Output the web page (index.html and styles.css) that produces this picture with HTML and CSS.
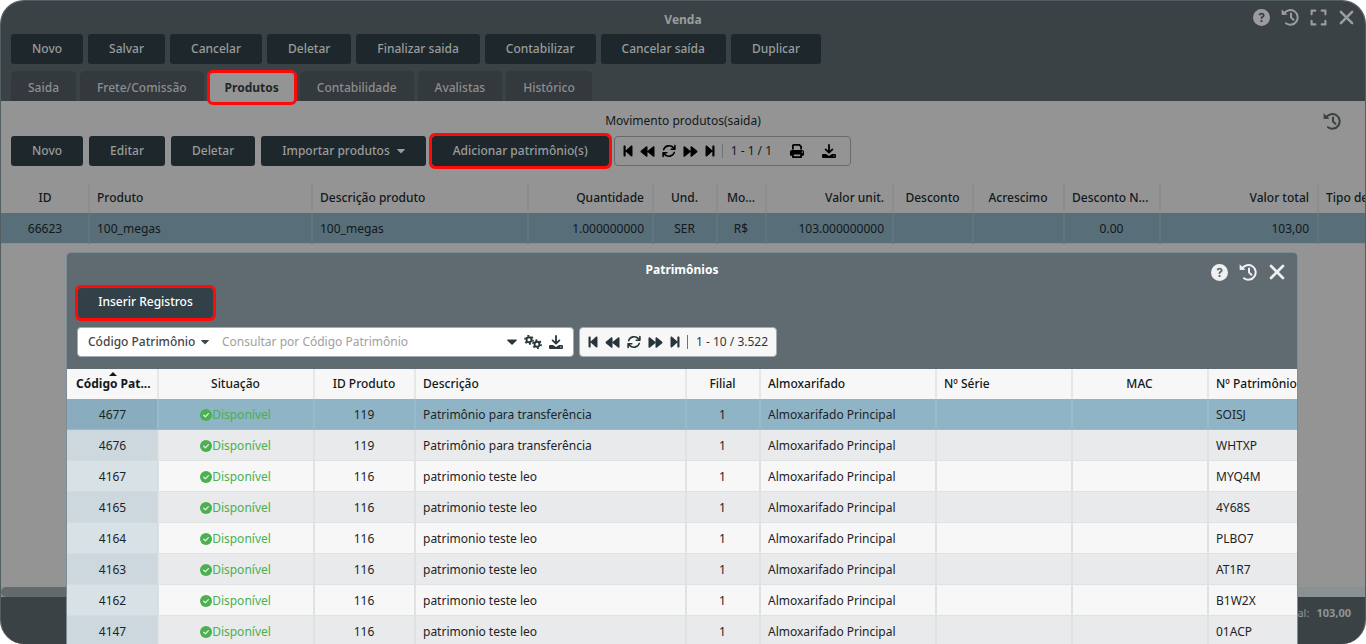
FILE: index.html
```html
<!DOCTYPE html>
<html lang="pt-BR">
<head>
<meta charset="utf-8">
<title>Venda</title>
<link rel="stylesheet" href="styles.css">
</head>
<body>
<svg class="sprite" aria-hidden="true">
  <symbol id="help" viewBox="0 0 16 16"><path fill="currentColor" fill-rule="evenodd" d="M8 0a8 8 0 1 0 0 16A8 8 0 0 0 8 0zM5.3 5.7C5.6 4.2 6.700 3.500 8.100 3.500c1.600 0 2.800 1 2.800 2.400 0 1.100-.6 1.700-1.500 2.200-.5.300-.6.500-.6.900v.3H7.200v-.5c0-1 .5-1.500 1.200-1.900.6-.4.800-.6.800-1 0-.5-.4-.8-1.100-.8-.6 0-1 .3-1.200.9zM7.100 10.300h1.800v1.900H7.100z"/></symbol>
  <symbol id="history" viewBox="0 0 18 18"><path fill="none" stroke="currentColor" stroke-width="2" stroke-linecap="round" stroke-linejoin="round" d="M3.200 5.400A7.300 7.300 0 1 1 5 15.200M10 5.500V9.400l2.400 2.300"/><path fill="currentColor" d="M.6 1.200l.1 5.700 5.800-.1z"/></symbol>
  <symbol id="expand" viewBox="0 0 16 16"><path fill="none" stroke="currentColor" stroke-width="2" stroke-linecap="round" stroke-linejoin="round" d="M1.500 5V1.500H5M11 1.500h3.500V5M14.500 11v3.500H11M5 14.500H1.500V11"/></symbol>
  <symbol id="close" viewBox="0 0 16 16"><path fill="none" stroke="currentColor" stroke-width="2.400" stroke-linecap="round" d="M2.700 2.700l10.600 10.600M13.300 2.700L2.700 13.300"/></symbol>
  <symbol id="step" viewBox="-.5 -.8 11 15.600"><path fill="currentColor" d="M0 1.700C0 1.300.3 1 .7 1h1c.4 0 .7.300.7.700v4.700L8.300 1.200C9 .7 10 1.100 10 2v10c0 .9-1 1.300-1.700.8L2.400 7.600v4.700c0 .4-.3.700-.7.700h-1c-.4 0-.7-.3-.7-.7z"/></symbol>
  <symbol id="rewind" viewBox="-18 -18 548 548"><path fill="currentColor" d="M11.500 280.600l192 160c20.600 17.200 52.500 2.800 52.500-24.600V96c0-27.400-31.900-41.800-52.500-24.600l-192 160c-15.300 12.800-15.300 36.400 0 49.200zm256 0l192 160c20.600 17.200 52.500 2.800 52.500-24.600V96c0-27.400-31.900-41.800-52.500-24.600l-192 160c-15.300 12.800-15.300 36.400 0 49.200z"/></symbol>
  <symbol id="refresh" viewBox="0 0 14 14"><path fill="none" stroke="currentColor" stroke-width="1.600" stroke-linecap="round" stroke-linejoin="round" d="M1.700 5.600C2.900 1.500 8.500.4 11.400 3.600l1.300 1.300M12.900 1.500V5.200H9.200M12.300 8.400c-1.200 4.100-6.800 5.200-9.700 2L1.300 9.100M1.100 12.500V8.800h3.700"/></symbol>
  <symbol id="print" viewBox="0 0 14 14"><path fill="currentColor" d="M2 5.500V1.700C2 .8 2.800 0 3.700 0h6l2.300 2.200v3.300h-1.800V2.900L9.100 1.800H3.800v3.700z"/><path fill="currentColor" fill-rule="evenodd" d="M1.800 6h10.400C13.200 6 14 6.800 14 7.800V11c0 .5-.3.800-.8.800H12v1.400c0 .5-.4.800-.9.800H2.900c-.5 0-.9-.3-.9-.8v-1.400H.8c-.5 0-.8-.3-.8-.8V7.800C0 6.800.8 6 1.800 6zm2 4.400v1.800h6.400v-1.800zM11.700 7.400v1.300H13V7.400z"/></symbol>
  <symbol id="download" viewBox="0 0 14 14"><path fill="none" stroke="currentColor" stroke-width="1.800" stroke-linecap="round" stroke-linejoin="round" d="M7 1v7.200M3.600 5.400L7 8.600l3.400-3.200"/><path fill="currentColor" fill-rule="evenodd" d="M1.400 9.900h2.600L7 12l3-2.100h2.600c.8 0 1.400.5 1.400 1.200v1.600c0 .7-.6 1.300-1.400 1.300H1.400C.6 14 0 13.400 0 12.700v-1.600c0-.7.600-1.200 1.400-1.200zm9.900 1.500v1.100h1.200v-1.100z"/></symbol>
  <symbol id="gears" viewBox="0 0 18 14"><g fill="none" stroke="currentColor"><circle cx="5" cy="4.800" r="2.500" stroke-width="1.900"/><circle cx="5" cy="4.800" r="4.100" stroke-width="1.600" stroke-dasharray="2 2.290"/><circle cx="13" cy="9.200" r="2.500" stroke-width="1.900"/><circle cx="13" cy="9.200" r="4.100" stroke-width="1.600" stroke-dasharray="2 2.290"/></g></symbol>
  <symbol id="caret" viewBox="0 0 10 6"><path fill="currentColor" d="M.7.500h8.600c.5 0 .8.600.4 1L5.600 5.600c-.3.300-.8.300-1.100 0L.3 1.500C-.1 1.100.2.500.7.500z"/></symbol>
  <symbol id="check" viewBox="0 0 12 12"><circle cx="6" cy="6" r="6" fill="currentColor"/><path fill="none" stroke="#ffffff" stroke-width="1.300" stroke-linecap="round" stroke-linejoin="round" stroke-opacity=".8" d="M3.700 6.200l1.700 1.600 3-3.200"/></symbol>
</svg>

<main class="window">
  <header class="window-head">
    <div class="title-bar">
      <h1>Venda</h1>
      <div class="window-tools">
        <button type="button" class="icon-btn" aria-label="Ajuda"><svg class="i17"><use href="#help"/></svg></button>
        <button type="button" class="icon-btn" aria-label="Histórico"><svg class="i18"><use href="#history"/></svg></button>
        <button type="button" class="icon-btn" aria-label="Expandir"><svg class="i17"><use href="#expand"/></svg></button>
        <button type="button" class="icon-btn" aria-label="Fechar"><svg class="i17"><use href="#close"/></svg></button>
      </div>
    </div>
    <div class="actions">
      <button type="button" class="btn">Novo</button>
      <button type="button" class="btn">Salvar</button>
      <button type="button" class="btn">Cancelar</button>
      <button type="button" class="btn">Deletar</button>
      <button type="button" class="btn">Finalizar saida</button>
      <button type="button" class="btn">Contabilizar</button>
      <button type="button" class="btn">Cancelar saída</button>
      <button type="button" class="btn">Duplicar</button>
    </div>
    <nav class="tabs">
      <button type="button" class="tab">Saida</button>
      <button type="button" class="tab">Frete/Comissão</button>
      <button type="button" class="tab active marked">Produtos</button>
      <button type="button" class="tab">Contabilidade</button>
      <button type="button" class="tab">Avalistas</button>
      <button type="button" class="tab">Histórico</button>
    </nav>
  </header>

  <section class="products">
    <div class="section-bar">
      <h2>Movimento produtos(saida)</h2>
      <button type="button" class="icon-btn section-history" aria-label="Histórico"><svg class="i18"><use href="#history"/></svg></button>
    </div>
    <div class="actions product-actions">
      <button type="button" class="btn">Novo</button>
      <button type="button" class="btn">Editar</button>
      <button type="button" class="btn">Deletar</button>
      <button type="button" class="btn">Importar produtos <svg class="caret small"><use href="#caret"/></svg></button>
      <button type="button" class="btn marked">Adicionar patrimônio(s)</button>
      <div class="pager">
        <button type="button" class="icon-btn" aria-label="Primeiro"><svg class="i10"><use href="#step"/></svg></button>
        <button type="button" class="icon-btn" aria-label="Anterior"><svg class="i15"><use href="#rewind"/></svg></button>
        <button type="button" class="icon-btn" aria-label="Atualizar"><svg class="i14"><use href="#refresh"/></svg></button>
        <button type="button" class="icon-btn flip" aria-label="Próximo"><svg class="i15"><use href="#rewind"/></svg></button>
        <button type="button" class="icon-btn flip" aria-label="Último"><svg class="i10"><use href="#step"/></svg></button>
        <span class="count">1 - 1 / 1</span>
        <button type="button" class="icon-btn extra" aria-label="Imprimir"><svg class="i14"><use href="#print"/></svg></button>
        <button type="button" class="icon-btn extra" aria-label="Baixar"><svg class="i14"><use href="#download"/></svg></button>
      </div>
    </div>
    <div class="grid-wrap">
      <table class="grid product-grid">
        <colgroup><col class="w88"><col class="w223"><col class="w216"><col class="w125"><col class="w64"><col class="w49"><col class="w127"><col class="w80"><col class="w91"><col class="w96"><col class="w158"><col class="w120"></colgroup>
        <thead><tr><th class="c">ID</th><th>Produto</th><th>Descrição produto</th><th class="r">Quantidade</th><th class="c">Und.</th><th class="c">Mo...</th><th class="r">Valor unit.</th><th class="c">Desconto</th><th class="c">Acrescimo</th><th>Desconto N...</th><th class="r">Valor total</th><th>Tipo desconto</th></tr></thead>
        <tbody><tr><td class="c">66623</td><td>100_megas</td><td>100_megas</td><td class="r">1.000000000</td><td class="c">SER</td><td class="c">R$</td><td class="r">103.000000000</td><td></td><td></td><td class="c">0.00</td><td class="r">103,00</td><td></td></tr></tbody>
      </table>
    </div>
  </section>
  <div class="scroll-track"><div class="scroll-thumb"></div></div>
  <footer class="window-foot"><span>Total:</span><strong>103,00</strong></footer>

  <section class="modal" role="dialog" aria-labelledby="modal-title">
    <div class="modal-head">
      <div class="title-bar">
        <h2 id="modal-title">Patrimônios</h2>
        <div class="modal-tools">
          <button type="button" class="icon-btn" aria-label="Ajuda"><svg class="i17"><use href="#help"/></svg></button>
          <button type="button" class="icon-btn" aria-label="Histórico"><svg class="i18"><use href="#history"/></svg></button>
          <button type="button" class="icon-btn" aria-label="Fechar"><svg class="i18"><use href="#close"/></svg></button>
        </div>
      </div>
      <div class="actions"><button type="button" class="btn marked insert">Inserir Registros</button></div>
      <div class="search-row">
        <div class="search">
          <label class="field">
            <select aria-label="Campo de busca"><option>Código Patrimônio</option></select>
            <svg class="caret small"><use href="#caret"/></svg>
          </label>
          <input type="text" aria-label="Consultar" placeholder="Consultar por Código Patrimônio">
          <button type="button" class="icon-btn" aria-label="Opções"><svg class="caret"><use href="#caret"/></svg></button>
          <button type="button" class="icon-btn" aria-label="Configurar"><svg class="gears"><use href="#gears"/></svg></button>
          <button type="button" class="icon-btn" aria-label="Baixar"><svg class="i14"><use href="#download"/></svg></button>
        </div>
        <div class="pager">
          <button type="button" class="icon-btn" aria-label="Primeiro"><svg class="i10"><use href="#step"/></svg></button>
          <button type="button" class="icon-btn" aria-label="Anterior"><svg class="i15"><use href="#rewind"/></svg></button>
          <button type="button" class="icon-btn" aria-label="Atualizar"><svg class="i14"><use href="#refresh"/></svg></button>
          <button type="button" class="icon-btn flip" aria-label="Próximo"><svg class="i15"><use href="#rewind"/></svg></button>
          <button type="button" class="icon-btn flip" aria-label="Último"><svg class="i10"><use href="#step"/></svg></button>
          <span class="count">1 - 10 / 3.522</span>
        </div>
      </div>
    </div>
    <table class="grid asset-grid">
      <colgroup><col class="w91"><col class="w156"><col class="w101"><col class="w271"><col class="w74"><col class="w176"><col class="w136"><col class="w136"><col class="w120"></colgroup>
      <thead><tr><th class="c sorted">Código Pat...</th><th class="c">Situação</th><th class="c">ID Produto</th><th>Descrição</th><th class="c">Filial</th><th>Almoxarifado</th><th>Nº Série</th><th class="c">MAC</th><th>Nº Patrimônio</th></tr></thead>
      <tbody>
        <tr class="selected"><td class="c">4677</td><td class="c status"><svg class="i12"><use href="#check"/></svg>Disponível</td><td class="c">119</td><td>Patrimônio para transferência</td><td class="c">1</td><td>Almoxarifado Principal</td><td></td><td></td><td>SOISJ</td></tr>
        <tr><td class="c">4676</td><td class="c status"><svg class="i12"><use href="#check"/></svg>Disponível</td><td class="c">119</td><td>Patrimônio para transferência</td><td class="c">1</td><td>Almoxarifado Principal</td><td></td><td></td><td>WHTXP</td></tr>
        <tr><td class="c">4167</td><td class="c status"><svg class="i12"><use href="#check"/></svg>Disponível</td><td class="c">116</td><td>patrimonio teste leo</td><td class="c">1</td><td>Almoxarifado Principal</td><td></td><td></td><td>MYQ4M</td></tr>
        <tr><td class="c">4165</td><td class="c status"><svg class="i12"><use href="#check"/></svg>Disponível</td><td class="c">116</td><td>patrimonio teste leo</td><td class="c">1</td><td>Almoxarifado Principal</td><td></td><td></td><td>4Y68S</td></tr>
        <tr><td class="c">4164</td><td class="c status"><svg class="i12"><use href="#check"/></svg>Disponível</td><td class="c">116</td><td>patrimonio teste leo</td><td class="c">1</td><td>Almoxarifado Principal</td><td></td><td></td><td>PLBO7</td></tr>
        <tr><td class="c">4163</td><td class="c status"><svg class="i12"><use href="#check"/></svg>Disponível</td><td class="c">116</td><td>patrimonio teste leo</td><td class="c">1</td><td>Almoxarifado Principal</td><td></td><td></td><td>AT1R7</td></tr>
        <tr><td class="c">4162</td><td class="c status"><svg class="i12"><use href="#check"/></svg>Disponível</td><td class="c">116</td><td>patrimonio teste leo</td><td class="c">1</td><td>Almoxarifado Principal</td><td></td><td></td><td>B1W2X</td></tr>
        <tr><td class="c">4147</td><td class="c status"><svg class="i12"><use href="#check"/></svg>Disponível</td><td class="c">116</td><td>patrimonio teste leo</td><td class="c">1</td><td>Almoxarifado Principal</td><td></td><td></td><td>01ACP</td></tr>
      </tbody>
    </table>
  </section>
</main>
</body>
</html>
```
FILE: styles.css
```css
* { box-sizing: border-box; }
body {
  margin: 0;
  background: #ffffff;
  font: 12px/18px "Noto Sans", sans-serif;
  color: #12181b;
}
h1, h2 { margin: 0; font-size: 12px; line-height: 18px; }
button, input, select { font: inherit; color: inherit; }
svg { display: block; }
.sprite { position: absolute; width: 0; height: 0; }

.window {
  position: relative;
  display: flex;
  flex-direction: column;
  height: 100vh;
  overflow: hidden;
  border: 1px solid #535e62;
  border-bottom: 0;
  border-radius: 24px;
  background: #949494;
}
.window-head { background: #3b4245; color: #9a9c9d; }
.title-bar {
  position: relative;
  display: flex;
  justify-content: center;
}
.window-head .title-bar { padding: 10px 0 5px; }
.window-tools, .modal-tools {
  position: absolute;
  top: 7px;
  right: 10px;
  display: flex;
  align-items: center;
  gap: 11px;
}
.icon-btn {
  display: flex;
  padding: 0;
  border: 0;
  background: none;
  cursor: pointer;
}
.flip svg { transform: scaleX(-1); }
.i10 { width: 10px; height: 14px; }
.i12 { width: 12px; height: 12px; }
.i14 { width: 14px; height: 14px; }
.i15 { width: 15px; height: 15px; }
.i17 { width: 17px; height: 17px; }
.i18 { width: 18px; height: 18px; }
.caret { width: 10px; height: 6px; }
.caret.small { width: 8px; }
.gears { width: 18px; height: 14px; }

.actions { display: flex; gap: 5px; padding: 0 10px; }
.btn {
  display: flex;
  align-items: center;
  justify-content: center;
  gap: 7px;
  height: 30px;
  padding: 0 21px;
  border: 0;
  border-radius: 3px;
  background: #1e282c;
  color: #9a9c9d;
  font-weight: 500;
  white-space: nowrap;
}
.tabs { display: flex; gap: 4px; padding: 7px 10px 0; }
.tab {
  height: 30px;
  padding: 3px 17px 0;
  border: 0;
  border-radius: 5px 5px 0 0;
  background: #33393c;
  color: #8d8f90;
  font-weight: 500;
}
.tab.active { background: #949494; color: #1e282c; font-weight: 700; }
.marked { position: relative; }
.marked::after {
  content: "";
  position: absolute;
  inset: -3px;
  border: 3px solid #ff0a0a;
  border-radius: 6px;
}
.tab.marked::after { inset: -1px -1px -4px; }

.products { flex: 1; min-height: 0; }
.section-bar {
  position: relative;
  display: flex;
  justify-content: center;
  padding: 11px 0 6px;
}
.section-bar h2 { font-weight: 400; }
.section-history { position: absolute; top: 11px; right: 24px; color: #3b4042; }
.product-actions { gap: 6px; }
.pager {
  display: flex;
  align-items: center;
  gap: 7px;
  height: 30px;
  padding: 0 8px;
  border: 1px solid #656c6f;
  border-radius: 4px;
  color: #000000;
}
.product-actions .pager { margin-left: -1px; }
.count {
  position: relative;
  padding-left: 9px;
  color: #12181b;
  white-space: nowrap;
}
.count::before {
  content: "";
  position: absolute;
  left: 0;
  top: 2px;
  height: 14px;
  border-left: 1px solid #6d7375;
}
.extra { margin-left: 11px; }
.extra:last-child { margin-right: 6px; }

.grid-wrap { margin-top: 17px; overflow: hidden; }
.grid { table-layout: fixed; border-collapse: separate; border-spacing: 0; }
.grid th, .grid td {
  padding: 0 8px 0 7px;
  overflow: hidden;
  white-space: nowrap;
  text-align: left;
  border-left: 1px solid;
  border-right: 1px solid;
}
.grid th { height: 30px; font-weight: 500; }
.grid td { height: 31px; padding-top: 2px; border-bottom: 1px solid; }
.grid th:first-child, .grid td:first-child { border-left: 0; padding-left: 9px; }
.grid .c { text-align: center; }
.grid .r { text-align: right; }
.product-grid { width: 1437px; }
.product-grid th { border-color: #8b8d8e; }
.product-grid td { background: #586e79; border-color: #61757f; border-bottom-color: #839096; }

.scroll-track { height: 10px; background: #8b9092; }
.scroll-thumb { width: 76%; height: 10px; border-radius: 5px; background: #64696b; }
.window-foot {
  display: flex;
  justify-content: flex-end;
  gap: 7px;
  height: 47px;
  padding: 7px 14px;
  background: #3b4245;
  color: #929495;
  font-size: 11px;
}

.modal {
  position: absolute;
  top: 252px;
  right: 68px;
  bottom: 0;
  left: 66px;
  overflow: hidden;
  border-radius: 4px 4px 0 0;
  background: #5f6b70;
  box-shadow: 0 0 0 1px #7c8d95;
}
.modal-head { height: 116px; color: #ffffff; }
.modal-head .title-bar { padding: 8px 0 9px; }
.modal-tools { top: 10px; right: 11px; color: #f0f0f0; }
.modal .btn { padding: 0 20px 2px; background: #324047; color: #ffffff; }
.modal .actions { padding: 0 11px; }
.insert.marked { min-width: 135px; }
.search-row { display: flex; gap: 5px; padding: 9px 10px; }
.search {
  display: flex;
  align-items: center;
  width: 497px;
  height: 30px;
  gap: 7px;
  padding: 0 10px;
  border: 1px solid #a3adb1;
  border-radius: 4px;
  background: #ffffff;
  color: #2a363c;
}
.field { display: flex; align-items: center; gap: 5px; color: #3f464a; font-weight: 500; }
.field select { padding: 0; border: 0; background: none; appearance: none; outline: 0; }
.search input {
  flex: 1;
  min-width: 0;
  padding: 0 6px;
  border: 0;
  outline: 0;
  background: none;
}
.search input::placeholder { color: #a0a0a0; opacity: 1; }
.modal .pager { background: #f7f7f7; border-color: #a3adb1; color: #26343b; }
.modal .count { color: #2f373b; }

.asset-grid { width: 1261px; }
.asset-grid th { background: #f7f7f7; border-color: #e6e7e7; }
.asset-grid td { background: #f7f7f7; border-color: #dfe2e3; color: #1d2427; }
.asset-grid td:first-child { background: #d8e2e6; border-color: #d3dcdf; }
.asset-grid tr:nth-child(even) td { background: #e8eaeb; }
.asset-grid tr:nth-child(even) td:first-child { background: #ccd8de; }
.asset-grid .selected td { background: #8fb4c6; border-color: #9bbac8; }
.asset-grid .selected td:first-child { background: #89adbf; }
.asset-grid .sorted { position: relative; font-weight: 700; }
.sorted::after {
  content: "";
  position: absolute;
  top: 3px;
  left: 42px;
  border: 4px solid transparent;
  border-top: 0;
  border-bottom-color: #12181b;
}
.asset-grid .status { color: #4caf50; }
.status svg { display: inline-block; vertical-align: -2px; }

.w49 { width: 49px; }
.w64 { width: 64px; }
.w74 { width: 74px; }
.w80 { width: 80px; }
.w88 { width: 88px; }
.w91 { width: 91px; }
.w96 { width: 96px; }
.w101 { width: 101px; }
.w120 { width: 120px; }
.w125 { width: 125px; }
.w127 { width: 127px; }
.w136 { width: 136px; }
.w156 { width: 156px; }
.w158 { width: 158px; }
.w176 { width: 176px; }
.w216 { width: 216px; }
.w223 { width: 223px; }
.w271 { width: 271px; }
```
